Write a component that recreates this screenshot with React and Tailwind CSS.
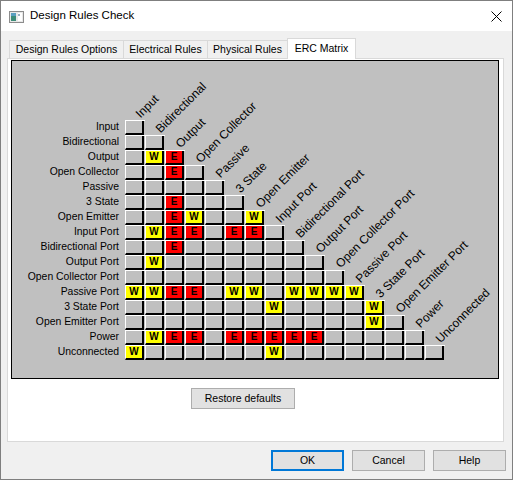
import { useState } from "react";

const ROWS = [
  "Input",
  "Bidirectional",
  "Output",
  "Open Collector",
  "Passive",
  "3 State",
  "Open Emitter",
  "Input Port",
  "Bidirectional Port",
  "Output Port",
  "Open Collector Port",
  "Passive Port",
  "3 State Port",
  "Open Emitter Port",
  "Power",
  "Unconnected",
];

// one string per row, a char per column: "." no report, "W" warning, "E" error
const MATRIX = [
  ".",
  "..",
  ".WE",
  "..E.",
  ".....",
  "..E...",
  "..EW..W",
  ".WEE.EE.",
  "..E......",
  ".W........",
  "...........",
  "WWEE.WW.WWWW",
  ".......W....W",
  "............W.",
  ".WEE.EEEEE.....",
  "W......W........",
];

const TABS = [
  { name: "Design Rules Options", w: "w-[115px]" },
  { name: "Electrical Rules", w: "w-[85px]" },
  { name: "Physical Rules", w: "w-[81px]" },
  { name: "ERC Matrix", w: "w-[69px]" },
];

const Cell = ({ value, label }) => {
  const fill =
    value === "W" ? "bg-[#ffff00]" : value === "E" ? "bg-[#ff0000]" : "bg-[#c0c0c0]";

  return (
    <div className="relative w-[20px] h-[15px] border-t border-white">
      <div
        className={`w-[19px] h-[14px] border-l border-white border-r-2 border-b-2 border-r-black border-b-black flex items-center justify-center ${fill}`}
      >
        {value !== "." && (
          <span className="text-[10px] font-bold leading-none text-black">{value}</span>
        )}
      </div>
      {/* column header sits on the diagonal cell */}
      {label && (
        <span className="absolute left-[17px] bottom-[15px] origin-bottom-left -rotate-45 whitespace-nowrap text-[12px] leading-none text-black">
          {label}
        </span>
      )}
    </div>
  );
};

const Button = ({ children, focused, className = "" }) => (
  <button
    className={`h-[21px] bg-[#e1e1e1] text-[10.5px] text-black ${
      focused ? "border-2 border-[#0078d7]" : "border border-[#adadad]"
    } ${className}`}
  >
    {children}
  </button>
);

const AppIcon = () => (
  <svg width="15" height="12" viewBox="0 0 15 12">
    <rect x="0.5" y="0.5" width="14" height="11" fill="#e8e8e8" stroke="#8c8c8c" />
    <rect x="2" y="2" width="5" height="8" fill="#3c8c78" />
    <rect x="2" y="2" width="5" height="3" fill="#5a9fc0" />
    <rect x="9" y="2" width="4" height="8" fill="#ffffff" />
    <rect x="9" y="3" width="2" height="2" fill="#9ab0c0" />
  </svg>
);

export default function App() {
  const [tab, setTab] = useState(3);

  return (
    <div className="w-[513px] h-[480px] flex flex-col border border-[#7f7f7f] bg-[#f0f0f0] font-['Liberation_Sans',Arial,sans-serif] text-black select-none">
      {/* title bar */}
      <div className="h-[30px] bg-white flex items-center shrink-0">
        <div className="ml-[8px] mt-[1px]">
          <AppIcon />
        </div>
        <span className="ml-[6px] text-[11.5px]">Design Rules Check</span>
        <svg className="ml-auto mr-[10px]" width="11" height="11" viewBox="0 0 11 11">
          <path d="M0.5 0.5 L10.5 10.5 M10.5 0.5 L0.5 10.5" stroke="#000" strokeWidth="1" />
        </svg>
      </div>

      <div className="flex-1 flex flex-col pt-[7px] pl-[6px] pr-[8px]">
        {/* tabs */}
        <div className="flex items-end pl-[2px] h-[20px]">
          {TABS.map((t, i) =>
            i === tab ? (
              <div
                key={t.name}
                onClick={() => setTab(i)}
                className={`${t.w} -ml-px h-[21px] -mb-px relative z-10 bg-white border border-b-0 border-[#d9d9d9] flex items-center justify-center text-[10.5px]`}
              >
                {t.name}
              </div>
            ) : (
              <div
                key={t.name}
                onClick={() => setTab(i)}
                className={`${t.w} ${i > 0 ? "-ml-px" : ""} h-[18px] bg-[#f0f0f0] border border-b-0 border-[#d9d9d9] flex items-center justify-center pt-[1px] text-[10.5px]`}
              >
                {t.name}
              </div>
            )
          )}
        </div>

        {/* tab page */}
        <div className="h-[384px] bg-white border border-[#d9d9d9] flex flex-col">
          <div className="ml-[3px] mt-[1px] w-[488px] h-[319px] border border-black bg-[#c0c0c0] pt-[59px]">
            {ROWS.map((row, r) => (
              <div key={row} className="flex h-[15px]">
                <div className="w-[107px] text-right text-[10.4px] leading-[14px] whitespace-nowrap">
                  {row}
                </div>
                <div className="flex ml-[6px]">
                  {MATRIX[r].split("").map((v, c) => (
                    <Cell key={c} value={v} label={c === r ? ROWS[c] : null} />
                  ))}
                </div>
              </div>
            ))}
          </div>
          <Button className="w-[104px] ml-[183px] mt-[9px]">Restore defaults</Button>
        </div>

        {/* dialog buttons */}
        <div className="flex justify-end gap-[8px] mt-[8px] -mr-[2px]">
          <Button focused className="w-[73px]">
            OK
          </Button>
          <Button className="w-[73px]">Cancel</Button>
          <Button className="w-[73px]">Help</Button>
        </div>
      </div>
    </div>
  );
}
